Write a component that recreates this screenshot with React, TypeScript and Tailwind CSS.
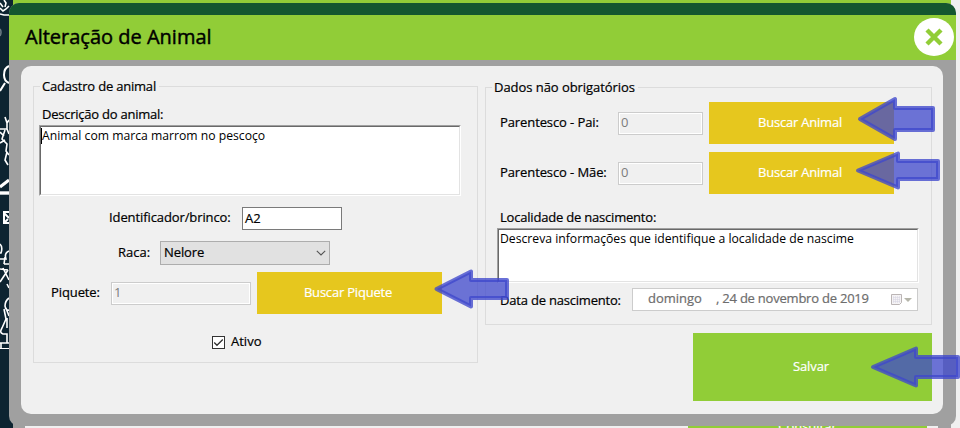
import type { ReactNode } from "react";

function Text({ className = "", children }: { className?: string; children: ReactNode }) {
  return <span className={`block shrink-0 whitespace-pre leading-[18px] ${className}`}>{children}</span>;
}

function Legend({ className = "", children }: { className?: string; children: ReactNode }) {
  return (
    <div className="flex h-[18px] items-center">
      <div className="h-px w-[7px] bg-[#dcdcdc]" />
      <Text className={`pl-[2px] ${className}`}>{children}</Text>
      <div className="h-px flex-1 bg-[#dcdcdc]" />
    </div>
  );
}

function Memo({ className = "", children }: { className?: string; children: ReactNode }) {
  return (
    <div className={`w-[422px] border border-t-[#a0a0a0] border-l-[#a0a0a0] border-r-white border-b-white ${className}`}>
      <div className="h-full border border-t-[#696969] border-l-[#696969] border-r-[#e3e3e3] border-b-[#e3e3e3] bg-white text-[12.2px] [-webkit-text-stroke:0]">
        {children}
      </div>
    </div>
  );
}

function DisabledInput({ className = "", value }: { className?: string; value: string }) {
  return (
    <div className={`h-[23px] shrink-0 border border-[#cccccc] ${className}`}>
      <div className="flex h-full items-center border border-white pb-[2px] pl-px text-[#7c7c7c] [-webkit-text-stroke:0]">
        <Text>{value}</Text>
      </div>
    </div>
  );
}

function SearchButton({ children }: { children: ReactNode }) {
  return (
    <button className="ml-[6px] flex h-[42px] w-[185px] shrink-0 items-center justify-center bg-[#e6c71e] pr-[3px] pb-[2px] tracking-[-0.2px] text-white">
      {children}
    </button>
  );
}

function BackdropIcons() {
  return (
    <svg className="h-[428px] w-[13px]" viewBox="0 0 13 428" fill="none" stroke="#fff" strokeWidth="1.6">
      <path d="M0 3l3 4M0 8l3 3 3-2 3-3M0 14l4 1h5M4 0l2 3-1 4" />
      <path d="M0 29q2 3 0 7" stroke="#6b7a83" />
      <path d="M9 66q-5 2-5 9 0 6 5 8M5 83l-5 8" strokeWidth="2" />
      <path d="M5 117l2 6v6H0M7 123l2-3M7 129l2 5M5 130l-3 9 5 5-1 7 3 4M0 132l4 4M7 152l-2 8 3 5M5 140l-5 3" />
      <path d="M0 187l9-7" strokeWidth="3" />
      <path d="M0 193h9" strokeWidth="3.4" />
      <path d="M9 212H4v11h5M4 213l5 5M4 223l4-4" strokeWidth="2" />
      <path d="M0 244q3 3 1 9H0M9 251q-5 2-3 8H0M4 264h5M5 257l-1 7M0 269l8 1M8 270l-8 12M3 268l6 12M7 284l2 4" />
      <path d="M9 298q-4 3-4 8 1 5 4 4M6 308l3 8M4 309l2 10-4 9M2 328q-3 5 1 6h4v9H1v5M7 318v10M0 343h9" />
      <path d="M0 348.500h9" strokeWidth="1" />
    </svg>
  );
}

const ARROWS = [
  "M860 119L895 99V108H933V130H895V139Z",
  "M858 170.500L898 153.500V161H938V179H898V187.500Z",
  "M436.500 289L471 271.500V280H507V298H471V306.500Z",
  "M873 367L916 348.500V357H958V377H916V385.500Z",
];

function Arrows() {
  return (
    <svg className="pointer-events-none absolute inset-0" width="960" height="428" viewBox="0 0 960 428">
      {ARROWS.map((d) => (
        <path key={d} d={d} fill="#3f48cc" fillOpacity=".75" stroke="#3f48cc" strokeOpacity=".78" strokeWidth="4" strokeLinejoin="round" />
      ))}
    </svg>
  );
}

function AnimalForm() {
  return (
    <section className="mt-[11px] ml-[12px] w-[445px]">
      <Legend className="w-[119px] tracking-[-0.2px]">Cadastro de animal</Legend>
      <div className="-mt-[9px] h-[277px] border border-t-0 border-[#dcdcdc] pt-[19px] pl-[5px]">
        <Text className="ml-[3px] tracking-[-0.24px]">Descrição do animal:</Text>
        <Memo className="mt-[2px] h-[71px]">
          <div className="flex h-[18px]">
            <div className="mt-px h-[16px] w-px bg-black" />
            <Text>Animal com marca marrom no pescoço</Text>
          </div>
        </Memo>
        <div className="mt-[11px] flex h-[23px] items-center">
          <Text className="-mt-[3px] ml-[70px] w-[133px] tracking-[-0.1px]">Identificador/brinco:</Text>
          <div className="flex h-[23px] w-[100px] items-center border border-[#7a7a7a] bg-white pb-[2px] pl-[2px]">
            <Text>A2</Text>
          </div>
        </div>
        <div className="mt-[11px] flex h-[24px] items-center">
          <Text className="-mt-[3px] ml-[79px] w-[42px]">Raca:</Text>
          <div className="flex h-[24px] w-[170px] items-center justify-between border border-[#adadad] bg-[#e1e1e1] pr-[3px] pl-[3px]">
            <Text className="-mt-[2px] tracking-[-0.1px]">Nelore</Text>
            <svg width="10" height="6" viewBox="0 0 10 6" fill="none" stroke="#555" strokeWidth="1.100">
              <path d="M.8.8L5 5l4.200-4.200" />
            </svg>
          </div>
        </div>
        <div className="mt-[7px] flex h-[42px] items-center">
          <Text className="-mt-[2px] ml-[12px] w-[60px] tracking-[-0.1px]">Piquete:</Text>
          <DisabledInput className="w-[140px]" value="1" />
          <SearchButton>
            <Text>Buscar Piquete</Text>
          </SearchButton>
        </div>
        <div className="mt-[19px] flex h-[18px] items-center">
          <div className="ml-[173px] h-[13px] w-[13px] border border-[#333] bg-white">
            <svg width="11" height="11" viewBox="0 0 11 11" fill="none" stroke="#333" strokeWidth="1.300">
              <path d="M1.200 5.500L4 8.300 9.800 2.500" />
            </svg>
          </div>
          <Text className="-mt-[2px] ml-[6px]">Ativo</Text>
        </div>
      </div>
    </section>
  );
}

function ParentRow({ label }: { label: string }) {
  return (
    <div className="flex h-[42px] items-center">
      <Text className="-mt-[2px] ml-[3px] w-[118px] tracking-[-0.1px]">{label}</Text>
      <DisabledInput className="w-[85px]" value="0" />
      <SearchButton>
        <Text>Buscar Animal</Text>
      </SearchButton>
    </div>
  );
}

function OptionalForm() {
  return (
    <section className="mt-[12px] ml-[7px] w-[447px]">
      <Legend className="w-[146px] tracking-[-0.05px]">Dados não obrigatórios</Legend>
      <div className="-mt-[9px] h-[238px] border border-t-0 border-[#dcdcdc] pt-[15px] pl-[11px]">
        <ParentRow label="Parentesco - Pai:" />
        <div className="h-[8px]" />
        <ParentRow label="Parentesco - Mãe:" />
        <Text className="mt-[14px] ml-[3px] tracking-[-0.2px]">Localidade de nascimento:</Text>
        <Memo className="mt-[2px] h-[55px]">
          <Text className="ml-px">Descreva informações que identifique a localidade de nascime</Text>
        </Memo>
        <div className="mt-[5px] flex h-[23px] items-center">
          <Text className="ml-[3px] w-[132px] tracking-[-0.2px]">Data de nascimento:</Text>
          <div className="flex h-[23px] w-[286px] items-center border border-[#cccccc] bg-white text-[#6d6d6d]">
            <Text className="-mt-[3px] ml-[15px] w-[68px]">domingo</Text>
            <Text className="-mt-[3px] w-[174px] tracking-[-0.22px]">, 24 de novembro de 2019</Text>
            <svg width="22" height="14" viewBox="0 0 22 14">
              <path d="M1.500 1.500h10v8l-2 2h-8z" fill="#f5f3f5" stroke="#bbb5b5" />
              <path d="M3.500 3v7M5.500 3v7M7.500 3v7M9.500 3v7M3 4.500h7M3 6.500h7M3 8.500h7" stroke="#d5d3e0" strokeWidth=".5" />
              <path d="M14 5h8l-4 4z" fill="#b5b5aa" />
            </svg>
          </div>
        </div>
      </div>
      <button className="mt-[8px] ml-[208px] flex h-[68px] w-[239px] items-center justify-center bg-[#91cd37] pr-[3px] pb-[2px] tracking-[-0.1px] text-white">
        <Text>Salvar</Text>
      </button>
    </section>
  );
}

export default function App() {
  return (
    <div className="relative h-[428px] w-[960px] overflow-hidden bg-[#f0f0f0] font-['Open_Sans','Noto_Sans',sans-serif] text-[13px] text-black [-webkit-text-stroke:0.2px]">
      <div className="flex h-full">
        <div className="w-[13px] bg-[#0d2431]">
          <BackdropIcons />
        </div>
        <div className="flex w-[938px] flex-col justify-between">
          <div className="h-[12px] bg-[#91cd37]" />
          <div className="flex h-[14px] overflow-hidden border-x-[13px] border-[#a0a0a0] border-l-[12px]">
            <div className="mt-[3px] ml-[663px] h-[20px] w-[239px] shrink-0 bg-[#91cd37] text-center text-white">
              <Text className="leading-[18px]">Consultar</Text>
            </div>
          </div>
        </div>
      </div>

      <main className="absolute top-[3px] left-[9px] h-[423px] w-[947px] overflow-hidden rounded-[10px] bg-[#a0a0a0]">
        <div className="h-[12px] bg-[#14572f]" />
        <header className="flex h-[45px] items-center justify-between bg-[#91cd37] pr-[2px] pl-[16px]">
          <h1 className="-mt-[2px] text-[20px] whitespace-nowrap [-webkit-text-stroke:0.45px]">Alteração de Animal</h1>
          <svg className="-mt-px" width="40" height="38" viewBox="0 0 40 38">
            <ellipse cx="20" cy="19" rx="20" ry="19" fill="#fff" />
            <path d="M13 12l14 14M27 12l-14 14" stroke="#91cd37" strokeWidth="4.400" />
          </svg>
        </header>
        <div className="mt-[6px] ml-[12px] flex h-[348px] w-[922px] rounded-[10px] bg-[#f0f0f0]">
          <AnimalForm />
          <OptionalForm />
        </div>
      </main>
      <Arrows />
    </div>
  );
}
